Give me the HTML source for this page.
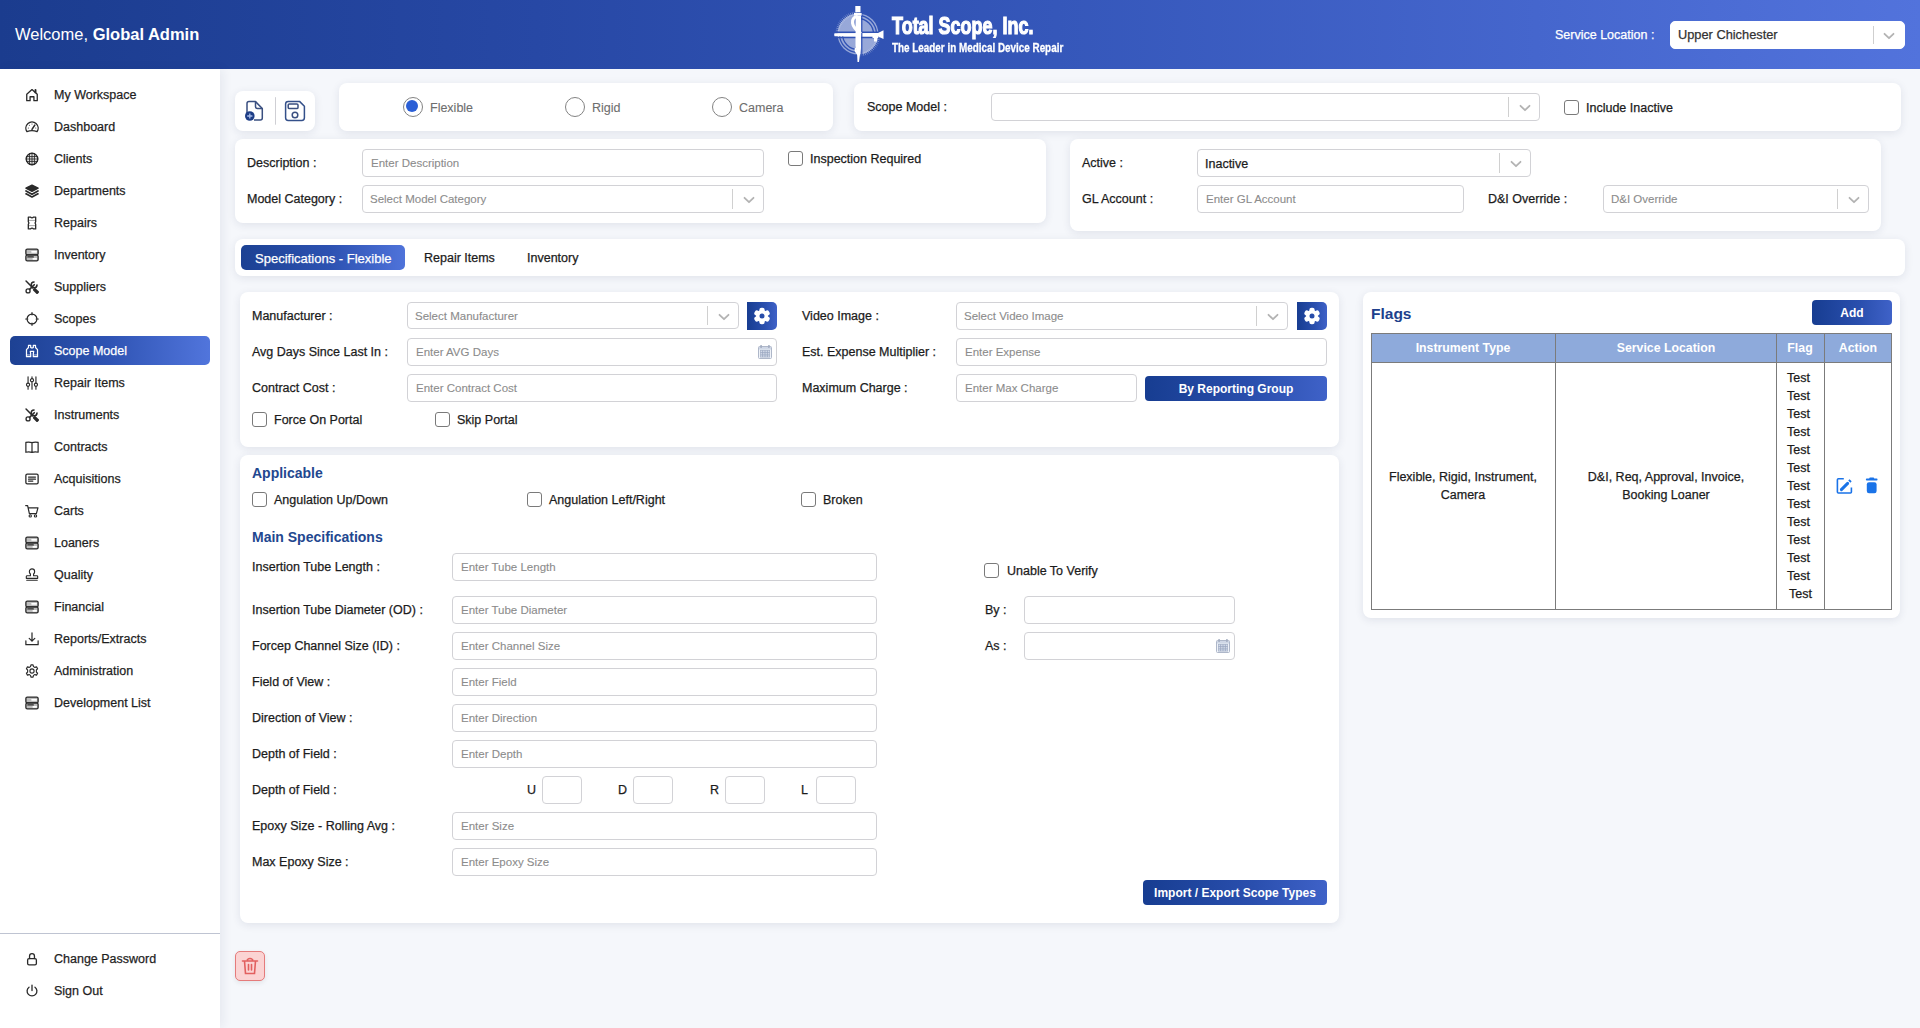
<!DOCTYPE html><html><head><meta charset="utf-8"><style>*{box-sizing:border-box;margin:0;padding:0}
html,body{width:1920px;height:1028px;overflow:hidden}
body{font-family:"Liberation Sans",sans-serif;background:#f5f7fb;color:#1c1c1c;position:relative}
.t{position:absolute;line-height:1;white-space:nowrap;}
#hdr{position:absolute;left:0;top:0;width:1920px;height:69px;background:linear-gradient(90deg,#1b3c8e 0%,#2748a5 28%,#3557ba 55%,#4566cd 80%,#5273dc 100%)}
#side{position:absolute;left:0;top:69px;width:220px;height:959px;background:#fff;box-shadow:3px 0 10px rgba(30,40,80,.07)}
.nav{position:absolute;left:10px;width:200px;height:29px;border-radius:5px}
.nav.act{background:linear-gradient(90deg,#1d4193 0%,#2f54b4 50%,#5175dc 100%)}
.ico{position:absolute;line-height:0}
.card{position:absolute;background:#fff;border-radius:8px;box-shadow:0 2px 8px rgba(40,50,90,.10)}
.box{position:absolute;background:#fff;border:1px solid #d2d2d6;border-radius:4px}
.dv{position:absolute;width:1px;background:#d0d0d0}
.chev{position:absolute;line-height:0}
.cb{position:absolute;border:1.2px solid #7a7a7a;border-radius:3px;background:#fff}
.btn{position:absolute;background:linear-gradient(90deg,#173d91 0%,#2a4fae 60%,#3f62c8 100%);border-radius:4px}
.radio{position:absolute;width:20px;height:20px;border:1.8px solid #838383;border-radius:50%;background:#fff}
.radio.on::after{content:"";position:absolute;left:2.2px;top:2.2px;width:12px;height:12px;border-radius:50%;background:#2b5fd6}
</style></head><body>
<div id="hdr"></div>
<div class="t" style="left:15px;top:26.33px;font-size:16.5px;color:#fff">Welcome, <b>Global Admin</b></div>
<svg style="position:absolute;left:826px;top:2px" width="64" height="64" viewBox="0 0 64 64">
<g fill="#fff" opacity=".5"><circle cx="32" cy="32" r="20.5"/></g>
<path d="M13.07 30.34L9.59 30.04M13.29 28.70L9.84 28.09M13.65 27.08L10.27 26.18M14.15 25.50L10.86 24.30M14.78 23.97L11.61 22.49M15.55 22.50L12.51 20.75M16.44 21.10L13.57 19.09M17.45 19.79L14.76 17.54M18.56 18.56L16.09 16.09M19.79 17.45L17.54 14.76M21.10 16.44L19.09 13.57M22.50 15.55L20.75 12.51M23.97 14.78L22.49 11.61M25.50 14.15L24.30 10.86M27.08 13.65L26.18 10.27M28.70 13.29L28.09 9.84M30.34 13.07L30.04 9.59M50.93 33.66L54.41 33.96M50.71 35.30L54.16 35.91M50.35 36.92L53.73 37.82M49.85 38.50L53.14 39.70M49.22 40.03L52.39 41.51M48.45 41.50L51.49 43.25M47.56 42.90L50.43 44.91M46.55 44.21L49.24 46.46M45.44 45.44L47.91 47.91M44.21 46.55L46.46 49.24M42.90 47.56L44.91 50.43M41.50 48.45L43.25 51.49M40.03 49.22L41.51 52.39M38.50 49.85L39.70 53.14M36.92 50.35L37.82 53.73M35.30 50.71L35.91 54.16M33.66 50.93L33.96 54.41" stroke="#fff" stroke-width=".7" opacity=".45"/>
<g fill="none" stroke="#3052b4" stroke-width="1.3">
<path d="M32 16.5 A15.5 15.5 0 0 1 47.5 32"/><path d="M32 13.5 A18.5 18.5 0 0 1 50.5 32"/>
<path d="M32 47.5 A15.5 15.5 0 0 1 16.5 32"/><path d="M32 50.5 A18.5 18.5 0 0 1 13.5 32"/>
</g>
<path d="M8 30.2 H54" stroke="#3052b4" stroke-width="1.4"/><path d="M8 35.6 H48" stroke="#3052b4" stroke-width="1.4"/>
<path d="M8.5 31.2 L52 30.9 L57.5 28.3 V37 L52 34.6 L8.5 34.3 Q7.8 32.7 8.5 31.2Z" fill="#fff"/>
<path d="M46.5 34 H52 V36 H51 V39.5 H48 V36 H46.5Z" fill="#fff"/>
<path d="M35.8 12 V60" stroke="#3052b4" stroke-width="1.2"/>
<rect x="29.3" y="4" width="5.2" height="6.3" fill="#fff"/>
<rect x="28" y="11" width="7.6" height="2.6" fill="#fff"/>
<path d="M30 13.5 H35 V46 L34 52 L33 60 H31.5 L31 50 L29.5 44 V34 Z" fill="#fff"/>
<path d="M31 14.5 Q26 15.5 26.5 21 Q27 26 35 31.5" fill="none" stroke="#fff" stroke-width="3"/>
<path d="M30 46 Q28.5 49.5 33.5 53" fill="none" stroke="#fff" stroke-width="2.2"/>
</svg>
<div class="t" style="left:892px;top:15.4px;font-size:23.5px;font-weight:bold;color:#fff;transform:scaleX(.765);transform-origin:0 0;letter-spacing:0;-webkit-text-stroke:1.2px #fff">Total Scope, Inc.</div>
<div class="t" style="left:892px;top:41.8px;font-size:12.5px;font-weight:bold;color:#fff;transform:scaleX(.79);transform-origin:0 0;-webkit-text-stroke:.3px #fff">The Leader in Medical Device Repair</div>
<div class="t " style="left:1555px;top:29.25px;font-size:12.5px;color:#fff;font-weight:normal;-webkit-text-stroke:.25px currentColor;">Service Location :</div>
<div class="box" style="left:1670px;top:21px;width:235px;height:28px;border-color:#fff;border-radius:5px"></div>
<div class="t " style="left:1678px;top:28.82px;font-size:12.8px;color:#333333;font-weight:normal;-webkit-text-stroke:.25px currentColor;">Upper Chichester</div>
<div class="dv" style="left:1873px;top:26px;height:18px;background:#cfcfcf"></div>
<div class="chev" style="left:1883px;top:32px"><svg width="12" height="8" viewBox="0 0 12 8"><path d="M1.5 1.8 L6 6.2 L10.5 1.8" fill="none" stroke="#b3b3b3" stroke-width="1.8" stroke-linecap="round" stroke-linejoin="round"/></svg></div>
<div id="side"></div>
<div class="ico" style="left:25px;top:87.5px"><svg width="14" height="14" viewBox="0 0 16 16" fill="none" stroke="#2a2a2a" stroke-width="1.5" stroke-linejoin="round" stroke-linecap="round"><path d="M2 14.5 V7.2 L8 1.8 L14 7.2 V14.5 H10.2 V10 H5.8 V14.5 Z"/><path d="M12 2.2 V5" stroke-width="2.2"/></svg></div>
<div class="t " style="left:54px;top:89.05px;font-size:12.5px;color:#1f1f1f;font-weight:normal;-webkit-text-stroke:.25px currentColor;">My Workspace</div>
<div class="ico" style="left:25px;top:119.5px"><svg width="14" height="14" viewBox="0 0 16 16" fill="none" stroke="#2a2a2a" stroke-width="1.5" stroke-linejoin="round" stroke-linecap="round"><path d="M2.2 13.2 A7 7 0 1 1 13.8 13.2 Q8 11.2 2.2 13.2 Z"/><path d="M8 10.8 L11.2 5.8" stroke-width="1.8"/><circle cx="3.8" cy="9.2" r=".6" fill="#2a2a2a" stroke="none"/><circle cx="5" cy="6" r=".6" fill="#2a2a2a" stroke="none"/><circle cx="8" cy="4.6" r=".6" fill="#2a2a2a" stroke="none"/><circle cx="12.3" cy="9.2" r=".6" fill="#2a2a2a" stroke="none"/></svg></div>
<div class="t " style="left:54px;top:121.05px;font-size:12.5px;color:#1f1f1f;font-weight:normal;-webkit-text-stroke:.25px currentColor;">Dashboard</div>
<div class="ico" style="left:25px;top:151.5px"><svg width="14" height="14" viewBox="0 0 16 16" fill="none" stroke="#2a2a2a" stroke-width="1.5" stroke-linejoin="round" stroke-linecap="round"><circle cx="8" cy="8" r="6.6" stroke-width="1.6"/><path d="M5.3 1.8 V14.2 M8 1.3 V14.7 M10.7 1.8 V14.2 M1.8 5.3 H14.2 M1.3 8 H14.7 M1.8 10.7 H14.2" stroke-width="1.1"/></svg></div>
<div class="t " style="left:54px;top:153.05px;font-size:12.5px;color:#1f1f1f;font-weight:normal;-webkit-text-stroke:.25px currentColor;">Clients</div>
<div class="ico" style="left:25px;top:183.5px"><svg width="14" height="14" viewBox="0 0 16 16" fill="none" stroke="#2a2a2a" stroke-width="1.5" stroke-linejoin="round" stroke-linecap="round"><path d="M8 1.2 L15 4.8 L8 8.4 L1 4.8 Z" fill="#2a2a2a"/><path d="M1.2 8 L8 11.6 L14.8 8" stroke-width="2"/><path d="M1.2 11.2 L8 14.8 L14.8 11.2" stroke-width="2"/></svg></div>
<div class="t " style="left:54px;top:185.05px;font-size:12.5px;color:#1f1f1f;font-weight:normal;-webkit-text-stroke:.25px currentColor;">Departments</div>
<div class="ico" style="left:25px;top:215.5px"><svg width="14" height="14" viewBox="0 0 16 16" fill="none" stroke="#2a2a2a" stroke-width="1.5" stroke-linejoin="round" stroke-linecap="round"><path d="M3.8 1.2 H6.2 Q8 3.2 9.8 1.2 H12.2 V6.5 Q10.8 8 12.2 9.5 V14.8 H9.8 Q8 12.8 6.2 14.8 H3.8 V9.5 Q5.2 8 3.8 6.5 Z"/><path d="M4.5 5 H11.5 M4.5 11 H11.5" stroke-width=".5"/></svg></div>
<div class="t " style="left:54px;top:217.05px;font-size:12.5px;color:#1f1f1f;font-weight:normal;-webkit-text-stroke:.25px currentColor;">Repairs</div>
<div class="ico" style="left:25px;top:247.5px"><svg width="14" height="14" viewBox="0 0 16 16" fill="none" stroke="#2a2a2a" stroke-width="1.5" stroke-linejoin="round" stroke-linecap="round"><rect x="1" y="1.2" width="14" height="6.6" rx="1.6" fill="#bdbdbd"/><rect x="1" y="8" width="14" height="6.8" rx="1.6" fill="#bdbdbd"/><path d="M8 4.4 H12.8 M9.5 12.3 H12.8" stroke="#fff" stroke-width="2"/><path d="M3.2 10.2 H9.5" stroke-width="1.4"/></svg></div>
<div class="t " style="left:54px;top:249.05px;font-size:12.5px;color:#1f1f1f;font-weight:normal;-webkit-text-stroke:.25px currentColor;">Inventory</div>
<div class="ico" style="left:25px;top:279.5px"><svg width="14" height="14" viewBox="0 0 16 16" fill="none" stroke="#2a2a2a" stroke-width="1.5" stroke-linejoin="round" stroke-linecap="round"><path d="M1.2 1.2 L8.8 8.8" stroke-width="1.7"/><rect x="-1.9" y="-3.7" width="3.8" height="7.4" rx="1.1" transform="translate(12.5 12.5) rotate(-45)" fill="#2a2a2a" stroke="none"/><path d="M5.2 10.8 L10.6 5.4" stroke-width="1.9"/><circle cx="3.5" cy="12.5" r="2.3" stroke-width="1.5"/><path d="M10.3 2.3 A3.3 3.3 0 1 0 13.7 5.7" stroke-width="1.8"/></svg></div>
<div class="t " style="left:54px;top:281.05px;font-size:12.5px;color:#1f1f1f;font-weight:normal;-webkit-text-stroke:.25px currentColor;">Suppliers</div>
<div class="ico" style="left:25px;top:311.5px"><svg width="14" height="14" viewBox="0 0 16 16" fill="none" stroke="#2a2a2a" stroke-width="1.5" stroke-linejoin="round" stroke-linecap="round"><circle cx="8" cy="8" r="5.6" stroke-width="1.4"/><path d="M8 .8 V3.2 M8 12.8 V15.2 M.8 8 H3.2 M12.8 8 H15.2" stroke-width="1.4"/></svg></div>
<div class="t " style="left:54px;top:313.05px;font-size:12.5px;color:#1f1f1f;font-weight:normal;-webkit-text-stroke:.25px currentColor;">Scopes</div>
<div class="nav act" style="top:336px;height:28.5px"></div>
<div class="ico" style="left:25px;top:343.5px"><svg width="14" height="14" viewBox="0 0 16 16" fill="none" stroke="#fff" stroke-width="1.5" stroke-linejoin="round" stroke-linecap="round"><path d="M4 1.5 H6.5 V4 Q8 5 9.5 4 V1.5 H12 V4 L14.3 6.5 V14.5 H9.5 V11 L10 8.5 H6 L6.5 11 V14.5 H1.7 V6.5 L4 4 Z" stroke-width="1.4"/><path d="M2.5 12.5 H5.5 M10.5 12.5 H13.5" stroke-width=".8"/></svg></div>
<div class="t " style="left:54px;top:345.05px;font-size:12.5px;color:#fff;font-weight:normal;-webkit-text-stroke:.25px currentColor;">Scope Model</div>
<div class="ico" style="left:25px;top:375.5px"><svg width="14" height="14" viewBox="0 0 16 16" fill="none" stroke="#2a2a2a" stroke-width="1.5" stroke-linejoin="round" stroke-linecap="round"><path d="M3.5 .8 V15.2 M8 .8 V15.2 M12.5 .8 V15.2" stroke-width="1.3"/><circle cx="3.5" cy="10" r="1.8" fill="#fff" stroke-width="1.3"/><circle cx="8" cy="4.8" r="1.8" fill="#fff" stroke-width="1.3"/><circle cx="12.5" cy="10" r="1.8" fill="#fff" stroke-width="1.3"/></svg></div>
<div class="t " style="left:54px;top:377.05px;font-size:12.5px;color:#1f1f1f;font-weight:normal;-webkit-text-stroke:.25px currentColor;">Repair Items</div>
<div class="ico" style="left:25px;top:407.5px"><svg width="14" height="14" viewBox="0 0 16 16" fill="none" stroke="#2a2a2a" stroke-width="1.5" stroke-linejoin="round" stroke-linecap="round"><path d="M1.2 1.2 L8.8 8.8" stroke-width="1.7"/><rect x="-1.9" y="-3.7" width="3.8" height="7.4" rx="1.1" transform="translate(12.5 12.5) rotate(-45)" fill="#2a2a2a" stroke="none"/><path d="M5.2 10.8 L10.6 5.4" stroke-width="1.9"/><circle cx="3.5" cy="12.5" r="2.3" stroke-width="1.5"/><path d="M10.3 2.3 A3.3 3.3 0 1 0 13.7 5.7" stroke-width="1.8"/></svg></div>
<div class="t " style="left:54px;top:409.05px;font-size:12.5px;color:#1f1f1f;font-weight:normal;-webkit-text-stroke:.25px currentColor;">Instruments</div>
<div class="ico" style="left:25px;top:439.5px"><svg width="14" height="14" viewBox="0 0 16 16" fill="none" stroke="#2a2a2a" stroke-width="1.5" stroke-linejoin="round" stroke-linecap="round"><path d="M1 2.8 Q4.5 1.8 8 3 Q11.5 1.8 15 2.8 V14 Q11.5 13 8 14.2 Q4.5 13 1 14 Z M8 3 V14.2" stroke-width="1.4"/></svg></div>
<div class="t " style="left:54px;top:441.05px;font-size:12.5px;color:#1f1f1f;font-weight:normal;-webkit-text-stroke:.25px currentColor;">Contracts</div>
<div class="ico" style="left:25px;top:471.5px"><svg width="14" height="14" viewBox="0 0 16 16" fill="none" stroke="#2a2a2a" stroke-width="1.5" stroke-linejoin="round" stroke-linecap="round"><rect x="1" y="2.4" width="14" height="11.2" rx="1.6" stroke-width="1.5"/><path d="M4 5.8 H12 M4 8.2 H12 M4 10.4 H9" stroke-width="1.3"/></svg></div>
<div class="t " style="left:54px;top:473.05px;font-size:12.5px;color:#1f1f1f;font-weight:normal;-webkit-text-stroke:.25px currentColor;">Acquisitions</div>
<div class="ico" style="left:25px;top:503.5px"><svg width="14" height="14" viewBox="0 0 16 16" fill="none" stroke="#2a2a2a" stroke-width="1.5" stroke-linejoin="round" stroke-linecap="round"><path d="M.8 1.8 H3 L5 11 H13 L14.8 4.5 H4" stroke-width="1.4"/><circle cx="6" cy="13.6" r="1.3" stroke-width="1.3"/><circle cx="12" cy="13.6" r="1.3" stroke-width="1.3"/></svg></div>
<div class="t " style="left:54px;top:505.05px;font-size:12.5px;color:#1f1f1f;font-weight:normal;-webkit-text-stroke:.25px currentColor;">Carts</div>
<div class="ico" style="left:25px;top:535.5px"><svg width="14" height="14" viewBox="0 0 16 16" fill="none" stroke="#2a2a2a" stroke-width="1.5" stroke-linejoin="round" stroke-linecap="round"><rect x="1" y="1.2" width="14" height="6.6" rx="1.6" fill="#bdbdbd"/><rect x="1" y="8" width="14" height="6.8" rx="1.6" fill="#bdbdbd"/><path d="M8 4.4 H12.8 M9.5 12.3 H12.8" stroke="#fff" stroke-width="2"/><path d="M3.2 10.2 H9.5" stroke-width="1.4"/></svg></div>
<div class="t " style="left:54px;top:537.05px;font-size:12.5px;color:#1f1f1f;font-weight:normal;-webkit-text-stroke:.25px currentColor;">Loaners</div>
<div class="ico" style="left:25px;top:567.5px"><svg width="14" height="14" viewBox="0 0 16 16" fill="none" stroke="#2a2a2a" stroke-width="1.5" stroke-linejoin="round" stroke-linecap="round"><path d="M6.2 8.8 V6.8 Q4.8 5.8 5 4 A3 3 0 0 1 11 4 Q11.2 5.8 9.8 6.8 V8.8 H13.5 Q14.5 8.8 14.5 9.8 V11.8 H1.5 V9.8 Q1.5 8.8 2.5 8.8 Z M2 14 H14" stroke-width="1.3"/></svg></div>
<div class="t " style="left:54px;top:569.05px;font-size:12.5px;color:#1f1f1f;font-weight:normal;-webkit-text-stroke:.25px currentColor;">Quality</div>
<div class="ico" style="left:25px;top:599.5px"><svg width="14" height="14" viewBox="0 0 16 16" fill="none" stroke="#2a2a2a" stroke-width="1.5" stroke-linejoin="round" stroke-linecap="round"><rect x="1" y="1.2" width="14" height="6.6" rx="1.6" fill="#bdbdbd"/><rect x="1" y="8" width="14" height="6.8" rx="1.6" fill="#bdbdbd"/><path d="M8 4.4 H12.8 M9.5 12.3 H12.8" stroke="#fff" stroke-width="2"/><path d="M3.2 10.2 H9.5" stroke-width="1.4"/></svg></div>
<div class="t " style="left:54px;top:601.05px;font-size:12.5px;color:#1f1f1f;font-weight:normal;-webkit-text-stroke:.25px currentColor;">Financial</div>
<div class="ico" style="left:25px;top:631.5px"><svg width="14" height="14" viewBox="0 0 16 16" fill="none" stroke="#2a2a2a" stroke-width="1.5" stroke-linejoin="round" stroke-linecap="round"><path d="M1 10 V14.5 H15 V10 M8 1 V10.5 M4.8 7.3 L8 10.5 L11.2 7.3" stroke-width="1.4"/></svg></div>
<div class="t " style="left:54px;top:633.05px;font-size:12.5px;color:#1f1f1f;font-weight:normal;-webkit-text-stroke:.25px currentColor;">Reports/Extracts</div>
<div class="ico" style="left:25px;top:663.5px"><svg width="14" height="14" viewBox="0 0 16 16" fill="none" stroke="#2a2a2a" stroke-width="1.5" stroke-linejoin="round" stroke-linecap="round"><circle cx="8" cy="8" r="2.4" stroke-width="1.3"/><path d="M6.8 1 H9.2 L9.7 3 L11.3 3.9 L13.2 3.3 L14.4 5.4 L13 6.8 V9.2 L14.4 10.6 L13.2 12.7 L11.3 12.1 L9.7 13 L9.2 15 H6.8 L6.3 13 L4.7 12.1 L2.8 12.7 L1.6 10.6 L3 9.2 V6.8 L1.6 5.4 L2.8 3.3 L4.7 3.9 L6.3 3 Z" stroke-width="1.3"/></svg></div>
<div class="t " style="left:54px;top:665.05px;font-size:12.5px;color:#1f1f1f;font-weight:normal;-webkit-text-stroke:.25px currentColor;">Administration</div>
<div class="ico" style="left:25px;top:695.5px"><svg width="14" height="14" viewBox="0 0 16 16" fill="none" stroke="#2a2a2a" stroke-width="1.5" stroke-linejoin="round" stroke-linecap="round"><rect x="1" y="1.2" width="14" height="6.6" rx="1.6" fill="#bdbdbd"/><rect x="1" y="8" width="14" height="6.8" rx="1.6" fill="#bdbdbd"/><path d="M8 4.4 H12.8 M9.5 12.3 H12.8" stroke="#fff" stroke-width="2"/><path d="M3.2 10.2 H9.5" stroke-width="1.4"/></svg></div>
<div class="t " style="left:54px;top:697.05px;font-size:12.5px;color:#1f1f1f;font-weight:normal;-webkit-text-stroke:.25px currentColor;">Development List</div>
<div style="position:absolute;left:0;top:933px;width:220px;height:1px;background:#bfc4d2"></div>
<div class="ico" style="left:25px;top:951.5px"><svg width="14" height="14" viewBox="0 0 16 16" fill="none" stroke="#2a2a2a" stroke-width="1.5" stroke-linejoin="round" stroke-linecap="round"><rect x="3" y="7.5" width="10" height="7.2" rx="1.6" stroke-width="1.5"/><path d="M5.2 7.5 V4.6 A2.8 2.8 0 0 1 10.8 4.6 V7.5" stroke-width="1.5"/></svg></div>
<div class="t " style="left:54px;top:953.05px;font-size:12.5px;color:#1f1f1f;font-weight:normal;-webkit-text-stroke:.25px currentColor;">Change Password</div>
<div class="ico" style="left:25px;top:983.5px"><svg width="14" height="14" viewBox="0 0 16 16" fill="none" stroke="#2a2a2a" stroke-width="1.5" stroke-linejoin="round" stroke-linecap="round"><path d="M8 1.2 V7.5" stroke-width="1.5"/><path d="M4.6 3.6 A5.6 5.6 0 1 0 11.4 3.6" stroke-width="1.5"/></svg></div>
<div class="t " style="left:54px;top:985.05px;font-size:12.5px;color:#1f1f1f;font-weight:normal;-webkit-text-stroke:.25px currentColor;">Sign Out</div>
<div class="card" style="left:235px;top:91px;width:80px;height:40px;"></div>
<svg style="position:absolute;left:240px;top:96px" width="70" height="30" viewBox="0 0 70 30" fill="none" stroke="#3a4f80" stroke-width="1.5" stroke-linejoin="round">
<path d="M7 17 V7.6 Q7 5.6 9 5.6 H15.5 L22.3 12.5 V22 Q22.3 24 20.3 24 H14"/><path d="M15.5 5.6 V10.5 Q15.5 12.5 17.5 12.5 H22.3"/>
<circle cx="9.8" cy="20" r="4.8" fill="#1d3d86" stroke="none"/><path d="M9.8 17.4 V22.6 M7.2 20 H12.4" stroke="#a9bdea" stroke-width="1.3"/>
<path d="M35.5 1.2 V28.7" stroke="#cfcfd4" stroke-width="1"/>
<path d="M45.6 8 Q45.6 5.4 48.2 5.4 H59.5 L64.4 10.3 V21.8 Q64.4 24.4 61.8 24.4 H48.2 Q45.6 24.4 45.6 21.8 Z" stroke="#34508a"/>
<rect x="48.2" y="7.9" width="9.8" height="4.7" rx="1.2"/><circle cx="55" cy="19" r="2.8"/>
</svg>
<div class="card" style="left:339px;top:83px;width:494px;height:48px;"></div>
<div class="radio on" style="left:403px;top:97px"></div>
<div class="t " style="left:430px;top:102.25px;font-size:12.5px;color:#6e6e6e;font-weight:normal;-webkit-text-stroke:.1px currentColor;">Flexible</div>
<div class="radio " style="left:565px;top:97px"></div>
<div class="t " style="left:592px;top:102.25px;font-size:12.5px;color:#6e6e6e;font-weight:normal;-webkit-text-stroke:.1px currentColor;">Rigid</div>
<div class="radio " style="left:712px;top:97px"></div>
<div class="t " style="left:739px;top:102.25px;font-size:12.5px;color:#6e6e6e;font-weight:normal;-webkit-text-stroke:.1px currentColor;">Camera</div>
<div class="card" style="left:854px;top:83px;width:1047px;height:48px;"></div>
<div class="t " style="left:867px;top:100.95px;font-size:12.5px;color:#1c1c1c;font-weight:normal;-webkit-text-stroke:.25px currentColor;">Scope Model :</div>
<div class="box" style="left:991px;top:93px;width:549px;height:28px;"></div>
<div class="dv" style="left:1508px;top:97px;height:20px"></div>
<div class="chev" style="left:1519px;top:104.0px"><svg width="12" height="8" viewBox="0 0 12 8"><path d="M1.5 1.8 L6 6.2 L10.5 1.8" fill="none" stroke="#b3b3b3" stroke-width="1.8" stroke-linecap="round" stroke-linejoin="round"/></svg></div>
<div class="cb" style="left:1564px;top:100px;width:15px;height:15px"></div>
<div class="t " style="left:1586px;top:102.25px;font-size:12.5px;color:#1c1c1c;font-weight:normal;-webkit-text-stroke:.25px currentColor;">Include Inactive</div>
<div class="card" style="left:235px;top:139px;width:811px;height:84px;"></div>
<div class="t " style="left:247px;top:157.25px;font-size:12.5px;color:#1c1c1c;font-weight:normal;-webkit-text-stroke:.25px currentColor;">Description :</div>
<div class="box" style="left:362px;top:149px;width:402px;height:28px;"></div>
<div class="t " style="left:371px;top:158.17px;font-size:11.5px;color:#8c8c8c;font-weight:normal;-webkit-text-stroke:.1px currentColor;">Enter Description</div>
<div class="t " style="left:247px;top:193.25px;font-size:12.5px;color:#1c1c1c;font-weight:normal;-webkit-text-stroke:.25px currentColor;">Model Category :</div>
<div class="box" style="left:362px;top:185px;width:402px;height:28px;"></div>
<div class="t " style="left:370px;top:194.17px;font-size:11.5px;color:#8c8c8c;font-weight:normal;-webkit-text-stroke:.1px currentColor;">Select Model Category</div>
<div class="dv" style="left:732px;top:189px;height:20px"></div>
<div class="chev" style="left:743px;top:196.0px"><svg width="12" height="8" viewBox="0 0 12 8"><path d="M1.5 1.8 L6 6.2 L10.5 1.8" fill="none" stroke="#b3b3b3" stroke-width="1.8" stroke-linecap="round" stroke-linejoin="round"/></svg></div>
<div class="cb" style="left:788px;top:151px;width:15px;height:15px"></div>
<div class="t " style="left:810px;top:153.25px;font-size:12.5px;color:#1c1c1c;font-weight:normal;-webkit-text-stroke:.25px currentColor;">Inspection Required</div>
<div class="card" style="left:1070px;top:139px;width:811px;height:92px;"></div>
<div class="t " style="left:1082px;top:157.25px;font-size:12.5px;color:#1c1c1c;font-weight:normal;-webkit-text-stroke:.25px currentColor;">Active :</div>
<div class="box" style="left:1197px;top:149px;width:334px;height:28px;"></div>
<div class="t " style="left:1205px;top:157.75px;font-size:12.5px;color:#1c1c1c;font-weight:normal;-webkit-text-stroke:.25px currentColor;">Inactive</div>
<div class="dv" style="left:1499px;top:153px;height:20px"></div>
<div class="chev" style="left:1510px;top:160.0px"><svg width="12" height="8" viewBox="0 0 12 8"><path d="M1.5 1.8 L6 6.2 L10.5 1.8" fill="none" stroke="#b3b3b3" stroke-width="1.8" stroke-linecap="round" stroke-linejoin="round"/></svg></div>
<div class="t " style="left:1082px;top:193.25px;font-size:12.5px;color:#1c1c1c;font-weight:normal;-webkit-text-stroke:.25px currentColor;">GL Account :</div>
<div class="box" style="left:1197px;top:185px;width:267px;height:28px;"></div>
<div class="t " style="left:1206px;top:194.17px;font-size:11.5px;color:#8c8c8c;font-weight:normal;-webkit-text-stroke:.1px currentColor;">Enter GL Account</div>
<div class="t " style="left:1488px;top:193.25px;font-size:12.5px;color:#1c1c1c;font-weight:normal;-webkit-text-stroke:.25px currentColor;">D&amp;I Override :</div>
<div class="box" style="left:1603px;top:185px;width:266px;height:28px;"></div>
<div class="t " style="left:1611px;top:194.17px;font-size:11.5px;color:#8c8c8c;font-weight:normal;-webkit-text-stroke:.1px currentColor;">D&amp;I Override</div>
<div class="dv" style="left:1837px;top:189px;height:20px"></div>
<div class="chev" style="left:1848px;top:196.0px"><svg width="12" height="8" viewBox="0 0 12 8"><path d="M1.5 1.8 L6 6.2 L10.5 1.8" fill="none" stroke="#b3b3b3" stroke-width="1.8" stroke-linecap="round" stroke-linejoin="round"/></svg></div>
<div class="card" style="left:235px;top:239px;width:1670px;height:37px;"></div>
<div class="btn" style="left:241px;top:245px;width:164px;height:25px;border-radius:5px;background:linear-gradient(90deg,#1c4193 0%,#2d52b2 55%,#4f73da 100%)"></div>
<div class="t " style="left:255px;top:251.86px;font-size:13px;color:#fff;font-weight:normal;-webkit-text-stroke:.25px currentColor;">Specifications - Flexible</div>
<div class="t " style="left:424px;top:252.25px;font-size:12.5px;color:#1c1c1c;font-weight:normal;-webkit-text-stroke:.25px currentColor;">Repair Items</div>
<div class="t " style="left:527px;top:252.25px;font-size:12.5px;color:#1c1c1c;font-weight:normal;-webkit-text-stroke:.25px currentColor;">Inventory</div>
<div class="card" style="left:240px;top:292px;width:1099px;height:155px;"></div>
<div class="t " style="left:252px;top:310.25px;font-size:12.5px;color:#1c1c1c;font-weight:normal;-webkit-text-stroke:.25px currentColor;">Manufacturer :</div>
<div class="box" style="left:407px;top:302px;width:332px;height:27px;"></div>
<div class="t " style="left:415px;top:310.67px;font-size:11.5px;color:#8c8c8c;font-weight:normal;-webkit-text-stroke:.1px currentColor;">Select Manufacturer</div>
<div class="dv" style="left:707px;top:306px;height:19px"></div>
<div class="chev" style="left:718px;top:312.5px"><svg width="12" height="8" viewBox="0 0 12 8"><path d="M1.5 1.8 L6 6.2 L10.5 1.8" fill="none" stroke="#b3b3b3" stroke-width="1.8" stroke-linecap="round" stroke-linejoin="round"/></svg></div>
<div class="btn" style="left:747px;top:302px;width:30px;height:28px;border-radius:0 5px 5px 0"></div>
<div class="ico" style="left:752.4px;top:306px"><svg width="20" height="20" viewBox="-10 -10 20 20"><mask id="gm1"><rect x="-10" y="-10" width="20" height="20" fill="#fff"/><circle r="2.5" fill="#000"/></mask><g fill="#fff" mask="url(#gm1)"><circle r="5.9"/><rect x="-2.7" y="-8.3" width="5.4" height="16.6" rx="2.3"/><rect x="-2.7" y="-8.3" width="5.4" height="16.6" rx="2.3" transform="rotate(60)"/><rect x="-2.7" y="-8.3" width="5.4" height="16.6" rx="2.3" transform="rotate(120)"/></g></svg></div>
<div class="t " style="left:252px;top:346.25px;font-size:12.5px;color:#1c1c1c;font-weight:normal;-webkit-text-stroke:.25px currentColor;">Avg Days Since Last In :</div>
<div class="box" style="left:407px;top:338px;width:370px;height:28px;"></div>
<div class="t " style="left:416px;top:347.17px;font-size:11.5px;color:#8c8c8c;font-weight:normal;-webkit-text-stroke:.1px currentColor;">Enter AVG Days</div>
<div class="ico" style="left:757.5px;top:345px"><svg width="14" height="14" viewBox="0 0 14 14"><rect x=".5" y="1.5" width="13" height="12" rx="1" fill="#f3f6fb" stroke="#aeb7c9"/><rect x="1" y="2" width="12" height="2.6" fill="#cfd7e6"/><rect x="2.3" y="0" width="1.6" height="3" rx=".5" fill="#a3adc1"/><rect x="10.1" y="0" width="1.6" height="3" rx=".5" fill="#a3adc1"/><rect x="2.3" y="5.3" width="9.4" height="6.8" fill="#d3dbea" stroke="#a2aec4" stroke-width=".7"/><path d="M4.6 5.3 V12.1 M7 5.3 V12.1 M9.4 5.3 V12.1 M2.3 7.6 H11.7 M2.3 9.9 H11.7" stroke="#9aa7c0" stroke-width=".8"/></svg></div>
<div class="t " style="left:252px;top:382.25px;font-size:12.5px;color:#1c1c1c;font-weight:normal;-webkit-text-stroke:.25px currentColor;">Contract Cost :</div>
<div class="box" style="left:407px;top:374px;width:370px;height:28px;"></div>
<div class="t " style="left:416px;top:383.17px;font-size:11.5px;color:#8c8c8c;font-weight:normal;-webkit-text-stroke:.1px currentColor;">Enter Contract Cost</div>
<div class="cb" style="left:252px;top:412px;width:15px;height:15px"></div>
<div class="t " style="left:274px;top:414.25px;font-size:12.5px;color:#1c1c1c;font-weight:normal;-webkit-text-stroke:.25px currentColor;">Force On Portal</div>
<div class="cb" style="left:435px;top:412px;width:15px;height:15px"></div>
<div class="t " style="left:457px;top:414.25px;font-size:12.5px;color:#1c1c1c;font-weight:normal;-webkit-text-stroke:.25px currentColor;">Skip Portal</div>
<div class="t " style="left:802px;top:310.25px;font-size:12.5px;color:#1c1c1c;font-weight:normal;-webkit-text-stroke:.25px currentColor;">Video Image :</div>
<div class="box" style="left:956px;top:302px;width:332px;height:28px;"></div>
<div class="t " style="left:964px;top:311.17px;font-size:11.5px;color:#8c8c8c;font-weight:normal;-webkit-text-stroke:.1px currentColor;">Select Video Image</div>
<div class="dv" style="left:1256px;top:306px;height:20px"></div>
<div class="chev" style="left:1267px;top:313.0px"><svg width="12" height="8" viewBox="0 0 12 8"><path d="M1.5 1.8 L6 6.2 L10.5 1.8" fill="none" stroke="#b3b3b3" stroke-width="1.8" stroke-linecap="round" stroke-linejoin="round"/></svg></div>
<div class="btn" style="left:1297px;top:302px;width:30px;height:28px;border-radius:0 5px 5px 0"></div>
<div class="ico" style="left:1302.4px;top:306px"><svg width="20" height="20" viewBox="-10 -10 20 20"><mask id="gm2"><rect x="-10" y="-10" width="20" height="20" fill="#fff"/><circle r="2.5" fill="#000"/></mask><g fill="#fff" mask="url(#gm2)"><circle r="5.9"/><rect x="-2.7" y="-8.3" width="5.4" height="16.6" rx="2.3"/><rect x="-2.7" y="-8.3" width="5.4" height="16.6" rx="2.3" transform="rotate(60)"/><rect x="-2.7" y="-8.3" width="5.4" height="16.6" rx="2.3" transform="rotate(120)"/></g></svg></div>
<div class="t " style="left:802px;top:346.25px;font-size:12.5px;color:#1c1c1c;font-weight:normal;-webkit-text-stroke:.25px currentColor;">Est. Expense Multiplier :</div>
<div class="box" style="left:956px;top:338px;width:371px;height:28px;"></div>
<div class="t " style="left:965px;top:347.17px;font-size:11.5px;color:#8c8c8c;font-weight:normal;-webkit-text-stroke:.1px currentColor;">Enter Expense</div>
<div class="t " style="left:802px;top:382.25px;font-size:12.5px;color:#1c1c1c;font-weight:normal;-webkit-text-stroke:.25px currentColor;">Maximum Charge :</div>
<div class="box" style="left:956px;top:374px;width:181px;height:28px;"></div>
<div class="t " style="left:965px;top:383.17px;font-size:11.5px;color:#8c8c8c;font-weight:normal;-webkit-text-stroke:.1px currentColor;">Enter Max Charge</div>
<div class="btn" style="left:1145px;top:376px;width:182px;height:25px;"></div>
<div class="t" style="left:1086.0px;width:300px;text-align:center;top:382.74px;font-size:12px;color:#fff;font-weight:bold;">By Reporting Group</div>
<div class="card" style="left:1363px;top:292px;width:537px;height:326px;"></div>
<div class="t " style="left:1371px;top:305.91px;font-size:15.5px;color:#203f8c;font-weight:bold;">Flags</div>
<div class="btn" style="left:1812px;top:300px;width:80px;height:25px;"></div>
<div class="t" style="left:1702.0px;width:300px;text-align:center;top:306.74px;font-size:12px;color:#fff;font-weight:bold;">Add</div>
<div style="position:absolute;left:1371px;top:333px;width:521px;height:277px;border:1px solid #7b7b7b;background:#fff"></div>
<div style="position:absolute;left:1372px;top:334px;width:519px;height:28px;background:#8eaadb"></div>
<div style="position:absolute;left:1371px;top:362px;width:521px;height:1px;background:#7b7b7b"></div>
<div style="position:absolute;left:1555px;top:333px;width:1px;height:277px;background:#7b7b7b"></div>
<div style="position:absolute;left:1776px;top:333px;width:1px;height:277px;background:#7b7b7b"></div>
<div style="position:absolute;left:1824px;top:333px;width:1px;height:277px;background:#7b7b7b"></div>
<div class="t" style="left:1313px;width:300px;text-align:center;top:342.41px;font-size:12.3px;color:#fff;font-weight:bold;">Instrument Type</div>
<div class="t" style="left:1516px;width:300px;text-align:center;top:342.41px;font-size:12.3px;color:#fff;font-weight:bold;">Service Location</div>
<div class="t" style="left:1650px;width:300px;text-align:center;top:342.41px;font-size:12.3px;color:#fff;font-weight:bold;">Flag</div>
<div class="t" style="left:1708px;width:300px;text-align:center;top:342.41px;font-size:12.3px;color:#fff;font-weight:bold;">Action</div>
<div class="t" style="left:1313px;width:300px;text-align:center;top:471.25px;font-size:12.5px;color:#1c1c1c;font-weight:normal;-webkit-text-stroke:.25px currentColor;">Flexible, Rigid, Instrument,</div>
<div class="t" style="left:1313px;width:300px;text-align:center;top:489.25px;font-size:12.5px;color:#1c1c1c;font-weight:normal;-webkit-text-stroke:.25px currentColor;">Camera</div>
<div class="t" style="left:1516px;width:300px;text-align:center;top:471.25px;font-size:12.5px;color:#1c1c1c;font-weight:normal;-webkit-text-stroke:.25px currentColor;">D&amp;I, Req, Approval, Invoice,</div>
<div class="t" style="left:1516px;width:300px;text-align:center;top:489.25px;font-size:12.5px;color:#1c1c1c;font-weight:normal;-webkit-text-stroke:.25px currentColor;">Booking Loaner</div>
<div class="t " style="left:1787px;top:372.25px;font-size:12.5px;color:#1c1c1c;font-weight:normal;-webkit-text-stroke:.25px currentColor;">Test</div>
<div class="t " style="left:1787px;top:390.25px;font-size:12.5px;color:#1c1c1c;font-weight:normal;-webkit-text-stroke:.25px currentColor;">Test</div>
<div class="t " style="left:1787px;top:408.25px;font-size:12.5px;color:#1c1c1c;font-weight:normal;-webkit-text-stroke:.25px currentColor;">Test</div>
<div class="t " style="left:1787px;top:426.25px;font-size:12.5px;color:#1c1c1c;font-weight:normal;-webkit-text-stroke:.25px currentColor;">Test</div>
<div class="t " style="left:1787px;top:444.25px;font-size:12.5px;color:#1c1c1c;font-weight:normal;-webkit-text-stroke:.25px currentColor;">Test</div>
<div class="t " style="left:1787px;top:462.25px;font-size:12.5px;color:#1c1c1c;font-weight:normal;-webkit-text-stroke:.25px currentColor;">Test</div>
<div class="t " style="left:1787px;top:480.25px;font-size:12.5px;color:#1c1c1c;font-weight:normal;-webkit-text-stroke:.25px currentColor;">Test</div>
<div class="t " style="left:1787px;top:498.25px;font-size:12.5px;color:#1c1c1c;font-weight:normal;-webkit-text-stroke:.25px currentColor;">Test</div>
<div class="t " style="left:1787px;top:516.25px;font-size:12.5px;color:#1c1c1c;font-weight:normal;-webkit-text-stroke:.25px currentColor;">Test</div>
<div class="t " style="left:1787px;top:534.25px;font-size:12.5px;color:#1c1c1c;font-weight:normal;-webkit-text-stroke:.25px currentColor;">Test</div>
<div class="t " style="left:1787px;top:552.25px;font-size:12.5px;color:#1c1c1c;font-weight:normal;-webkit-text-stroke:.25px currentColor;">Test</div>
<div class="t " style="left:1787px;top:570.25px;font-size:12.5px;color:#1c1c1c;font-weight:normal;-webkit-text-stroke:.25px currentColor;">Test</div>
<div class="t " style="left:1789px;top:588.25px;font-size:12.5px;color:#1c1c1c;font-weight:normal;-webkit-text-stroke:.25px currentColor;">Test</div>
<div class="ico" style="left:1836px;top:477px"><svg width="17" height="17" viewBox="0 0 17 17" fill="none" stroke="#1a73e8" stroke-width="1.6" stroke-linejoin="round"><path d="M7.8 1.8 H2.4 Q1.4 1.8 1.4 2.8 V15 Q1.4 16 2.4 16 H14.4 Q15.4 16 15.4 15 V10.6"/><path d="M5.4 12.6 L11.6 6.4" stroke-width="3" stroke-linecap="round"/><path d="M13.3 4.6 L14.6 3.3" stroke-width="3"/></svg></div>
<div class="ico" style="left:1865px;top:477px"><svg width="13" height="17" viewBox="0 0 13 17" fill="#1a73e8"><rect x=".9" y="1.6" width="11.6" height="2" rx=".8"/><rect x="4.2" y=".6" width="5" height="2" rx="1"/><rect x="1.8" y="5.2" width="9.8" height="11.1" rx="2.2"/></svg></div>
<div class="card" style="left:240px;top:455px;width:1099px;height:468px;"></div>
<div class="t " style="left:252px;top:465.78px;font-size:14px;color:#22478f;font-weight:bold;">Applicable</div>
<div class="cb" style="left:252px;top:492px;width:15px;height:15px"></div>
<div class="t " style="left:274px;top:494.25px;font-size:12.5px;color:#1c1c1c;font-weight:normal;-webkit-text-stroke:.25px currentColor;">Angulation Up/Down</div>
<div class="cb" style="left:527px;top:492px;width:15px;height:15px"></div>
<div class="t " style="left:549px;top:494.25px;font-size:12.5px;color:#1c1c1c;font-weight:normal;-webkit-text-stroke:.25px currentColor;">Angulation Left/Right</div>
<div class="cb" style="left:801px;top:492px;width:15px;height:15px"></div>
<div class="t " style="left:823px;top:494.25px;font-size:12.5px;color:#1c1c1c;font-weight:normal;-webkit-text-stroke:.25px currentColor;">Broken</div>
<div class="t " style="left:252px;top:529.78px;font-size:14px;color:#22478f;font-weight:bold;">Main Specifications</div>
<div class="t " style="left:252px;top:561.25px;font-size:12.5px;color:#1c1c1c;font-weight:normal;-webkit-text-stroke:.25px currentColor;">Insertion Tube Length :</div>
<div class="box" style="left:452px;top:553px;width:425px;height:28px;"></div>
<div class="t " style="left:461px;top:562.17px;font-size:11.5px;color:#8c8c8c;font-weight:normal;-webkit-text-stroke:.1px currentColor;">Enter Tube Length</div>
<div class="t " style="left:252px;top:604.25px;font-size:12.5px;color:#1c1c1c;font-weight:normal;-webkit-text-stroke:.25px currentColor;">Insertion Tube Diameter (OD) :</div>
<div class="box" style="left:452px;top:596px;width:425px;height:28px;"></div>
<div class="t " style="left:461px;top:605.17px;font-size:11.5px;color:#8c8c8c;font-weight:normal;-webkit-text-stroke:.1px currentColor;">Enter Tube Diameter</div>
<div class="t " style="left:252px;top:640.25px;font-size:12.5px;color:#1c1c1c;font-weight:normal;-webkit-text-stroke:.25px currentColor;">Forcep Channel Size (ID) :</div>
<div class="box" style="left:452px;top:632px;width:425px;height:28px;"></div>
<div class="t " style="left:461px;top:641.17px;font-size:11.5px;color:#8c8c8c;font-weight:normal;-webkit-text-stroke:.1px currentColor;">Enter Channel Size</div>
<div class="t " style="left:252px;top:676.25px;font-size:12.5px;color:#1c1c1c;font-weight:normal;-webkit-text-stroke:.25px currentColor;">Field of View :</div>
<div class="box" style="left:452px;top:668px;width:425px;height:28px;"></div>
<div class="t " style="left:461px;top:677.17px;font-size:11.5px;color:#8c8c8c;font-weight:normal;-webkit-text-stroke:.1px currentColor;">Enter Field</div>
<div class="t " style="left:252px;top:712.25px;font-size:12.5px;color:#1c1c1c;font-weight:normal;-webkit-text-stroke:.25px currentColor;">Direction of View :</div>
<div class="box" style="left:452px;top:704px;width:425px;height:28px;"></div>
<div class="t " style="left:461px;top:713.17px;font-size:11.5px;color:#8c8c8c;font-weight:normal;-webkit-text-stroke:.1px currentColor;">Enter Direction</div>
<div class="t " style="left:252px;top:748.25px;font-size:12.5px;color:#1c1c1c;font-weight:normal;-webkit-text-stroke:.25px currentColor;">Depth of Field :</div>
<div class="box" style="left:452px;top:740px;width:425px;height:28px;"></div>
<div class="t " style="left:461px;top:749.17px;font-size:11.5px;color:#8c8c8c;font-weight:normal;-webkit-text-stroke:.1px currentColor;">Enter Depth</div>
<div class="t " style="left:252px;top:784.25px;font-size:12.5px;color:#1c1c1c;font-weight:normal;-webkit-text-stroke:.25px currentColor;">Depth of Field :</div>
<div class="t " style="left:252px;top:820.25px;font-size:12.5px;color:#1c1c1c;font-weight:normal;-webkit-text-stroke:.25px currentColor;">Epoxy Size - Rolling Avg :</div>
<div class="box" style="left:452px;top:812px;width:425px;height:28px;"></div>
<div class="t " style="left:461px;top:821.17px;font-size:11.5px;color:#8c8c8c;font-weight:normal;-webkit-text-stroke:.1px currentColor;">Enter Size</div>
<div class="t " style="left:252px;top:856.25px;font-size:12.5px;color:#1c1c1c;font-weight:normal;-webkit-text-stroke:.25px currentColor;">Max Epoxy Size :</div>
<div class="box" style="left:452px;top:848px;width:425px;height:28px;"></div>
<div class="t " style="left:461px;top:857.17px;font-size:11.5px;color:#8c8c8c;font-weight:normal;-webkit-text-stroke:.1px currentColor;">Enter Epoxy Size</div>
<div class="t " style="left:527px;top:784.25px;font-size:12.5px;color:#1c1c1c;font-weight:normal;-webkit-text-stroke:.25px currentColor;">U</div>
<div class="box" style="left:542px;top:776px;width:40px;height:28px;"></div>
<div class="t " style="left:618px;top:784.25px;font-size:12.5px;color:#1c1c1c;font-weight:normal;-webkit-text-stroke:.25px currentColor;">D</div>
<div class="box" style="left:633px;top:776px;width:40px;height:28px;"></div>
<div class="t " style="left:710px;top:784.25px;font-size:12.5px;color:#1c1c1c;font-weight:normal;-webkit-text-stroke:.25px currentColor;">R</div>
<div class="box" style="left:725px;top:776px;width:40px;height:28px;"></div>
<div class="t " style="left:801px;top:784.25px;font-size:12.5px;color:#1c1c1c;font-weight:normal;-webkit-text-stroke:.25px currentColor;">L</div>
<div class="box" style="left:816px;top:776px;width:40px;height:28px;"></div>
<div class="cb" style="left:984px;top:563px;width:15px;height:15px"></div>
<div class="t " style="left:1007px;top:565.25px;font-size:12.5px;color:#1c1c1c;font-weight:normal;-webkit-text-stroke:.25px currentColor;">Unable To Verify</div>
<div class="t " style="left:985px;top:604.25px;font-size:12.5px;color:#1c1c1c;font-weight:normal;-webkit-text-stroke:.25px currentColor;">By :</div>
<div class="box" style="left:1024px;top:596px;width:211px;height:28px;"></div>
<div class="t " style="left:985px;top:640.25px;font-size:12.5px;color:#1c1c1c;font-weight:normal;-webkit-text-stroke:.25px currentColor;">As :</div>
<div class="box" style="left:1024px;top:632px;width:211px;height:28px;"></div>
<div class="ico" style="left:1215.5px;top:639px"><svg width="14" height="14" viewBox="0 0 14 14"><rect x=".5" y="1.5" width="13" height="12" rx="1" fill="#f3f6fb" stroke="#aeb7c9"/><rect x="1" y="2" width="12" height="2.6" fill="#cfd7e6"/><rect x="2.3" y="0" width="1.6" height="3" rx=".5" fill="#a3adc1"/><rect x="10.1" y="0" width="1.6" height="3" rx=".5" fill="#a3adc1"/><rect x="2.3" y="5.3" width="9.4" height="6.8" fill="#d3dbea" stroke="#a2aec4" stroke-width=".7"/><path d="M4.6 5.3 V12.1 M7 5.3 V12.1 M9.4 5.3 V12.1 M2.3 7.6 H11.7 M2.3 9.9 H11.7" stroke="#9aa7c0" stroke-width=".8"/></svg></div>
<div class="btn" style="left:1143px;top:880px;width:184px;height:25px;"></div>
<div class="t" style="left:1085.0px;width:300px;text-align:center;top:886.74px;font-size:12px;color:#fff;font-weight:bold;">Import / Export Scope Types</div>
<div style="position:absolute;left:235px;top:951px;width:30px;height:30px;border-radius:5px;background:#fbd3d3;border:1px solid #e57b7b;box-shadow:0 2px 5px rgba(0,0,0,.08)"></div>
<div class="ico" style="left:240px;top:956px"><svg width="20" height="20" viewBox="0 0 20 20" fill="none" stroke="#e2605f" stroke-width="1.6" stroke-linecap="round"><path d="M2.5 5 H17.5 M7.5 5 V3.5 Q10 1.5 12.5 3.5 V5 M4.5 5 L5.5 17.5 H14.5 L15.5 5 M8.5 8.5 V14 M11.5 8.5 V14"/></svg></div>
</body></html>
